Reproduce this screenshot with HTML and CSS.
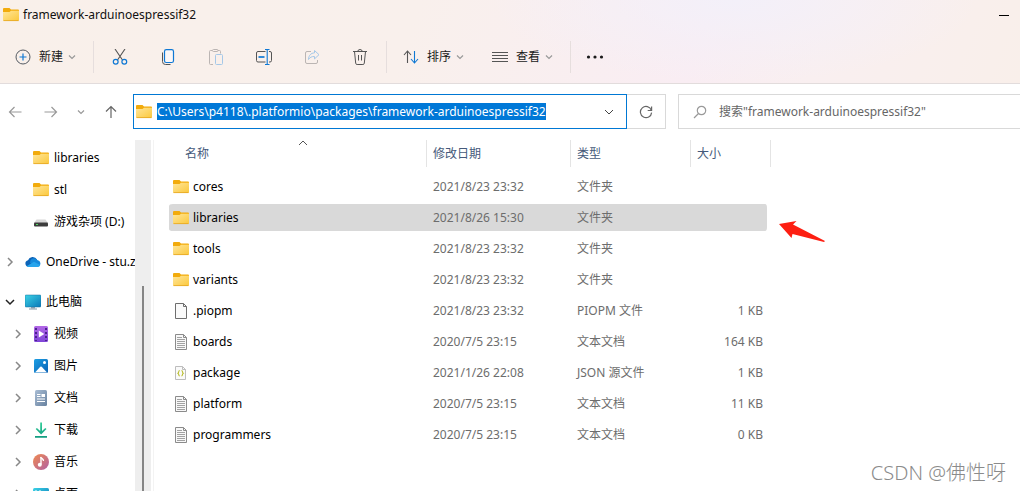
FILE: index.html
```html
<!DOCTYPE html>
<html lang="zh-CN">
<head>
<meta charset="utf-8">
<meta name="viewport" content="width=device-width, initial-scale=1">
<title>framework-arduinoespressif32</title>
<link rel="stylesheet" href="styles.css">
</head>
<body>
<svg class="defs" aria-hidden="true">
  <defs>
    <linearGradient id="gFolder" x1="0" y1="0" x2="1" y2="1"><stop offset="0" stop-color="#ffe69a"/><stop offset="1" stop-color="#fbc83c"/></linearGradient>
    <linearGradient id="gScreen" x1="0" y1="0" x2="1" y2="1"><stop offset="0" stop-color="#3cd3e6"/><stop offset="1" stop-color="#0a78b8"/></linearGradient>
    <linearGradient id="gVideo" x1="0" y1="0" x2="0" y2="1"><stop offset="0" stop-color="#b267e6"/><stop offset="1" stop-color="#7f45d8"/></linearGradient>
    <linearGradient id="gPhoto" x1="0" y1="0" x2="1" y2="1"><stop offset="0" stop-color="#1c9fe4"/><stop offset="1" stop-color="#0c62b4"/></linearGradient>
    <linearGradient id="gDoc" x1="0" y1="0" x2="1" y2="1"><stop offset="0" stop-color="#a9bdd4"/><stop offset="1" stop-color="#67819f"/></linearGradient>
    <linearGradient id="gDown" x1="0" y1="0" x2="0" y2="1"><stop offset="0" stop-color="#35cf9a"/><stop offset="1" stop-color="#109a7f"/></linearGradient>
    <linearGradient id="gMusic" x1="0" y1="0" x2="1" y2="1"><stop offset="0" stop-color="#f08a50"/><stop offset="1" stop-color="#b060a4"/></linearGradient>
  </defs>
  <symbol id="folder" viewBox="0 1 16 16">
    <path d="M0 3a1 1 0 0 1 1-1h5.500l1.500 1.500h7a1 1 0 0 1 1 1V7H0z" fill="#f2ab0c"/>
    <path d="M0 6h6.500L8 4.700h8V14a1 1 0 0 1-1 1H1a1 1 0 0 1-1-1z" fill="url(#gFolder)"/>
    <path d="M.5 14.600h15" stroke="#e3a51f" stroke-width=".8"/>
  </symbol>
  <symbol id="chevron-down" viewBox="0 0 10 10"><path d="M2 3.500l3 3 3-3" fill="none" stroke="currentColor" stroke-width="1.200"/></symbol>
  <symbol id="chevron-right" viewBox="0 0 10 10"><path d="M3 1l4 4-4 4" fill="none" stroke="currentColor" stroke-width="1.500"/></symbol>
  <symbol id="chevron-open" viewBox="0 0 10 10"><path d="M1 3l4 4 4-4" fill="none" stroke="currentColor" stroke-width="1.500"/></symbol>
  <symbol id="text-file" viewBox="0 0 16 16">
    <path d="M2.500.5h8l3 3v12h-11z" fill="#f8f8f8" stroke="#8b8b8b"/>
    <path d="M10.500.5v3h3" fill="none" stroke="#8b8b8b"/>
    <path d="M4 3.500h5M4 5.500h8M4 7.500h8M4 9.500h8M4 11.500h8M4 13.500h8" stroke="#a2a2a2"/>
  </symbol>
</svg>

<div class="window">
  <header class="chrome">
    <div class="titlebar">
      <svg class="icon"><use href="#folder"/></svg>
      <h1 class="title">framework-arduinoespressif32</h1>
      <button class="minimize" type="button" aria-label="最小化"></button>
    </div>
    <div class="toolbar">
      <button class="tool tool-new" type="button">
        <svg class="icon" viewBox="0 0 16 16" fill="none"><circle cx="8" cy="8" r="7" stroke="#555b63"/><path d="M8 4.500v7M4.500 8h7" stroke="#0f78d4" stroke-width="1.200"/></svg>
        <span>新建</span><svg class="caret"><use href="#chevron-down"/></svg>
      </button>
      <span class="divider"></span>
      <div class="actions">
        <button class="tool" type="button" aria-label="剪切"><svg class="icon" viewBox="0 0 16 16" fill="none"><path d="M3 0l7.500 11M13 0L5.500 11" stroke="#555" stroke-width="1.100"/><circle cx="3.700" cy="12.700" r="2.400" stroke="#0f78d4" stroke-width="1.200"/><circle cx="12.300" cy="12.700" r="2.400" stroke="#0f78d4" stroke-width="1.200"/></svg></button>
        <button class="tool" type="button" aria-label="复制"><svg class="icon" viewBox="0 0 16 16" fill="none"><path d="M2.500 3.500v9a3 3 0 0 0 3 3h5" stroke="#555"/><rect x="4.500" y=".7" width="9" height="12.800" rx="1.800" stroke="#0f78d4" stroke-width="1.200" fill="#fbf7f7"/></svg></button>
        <button class="tool" type="button" aria-label="粘贴" disabled><svg class="icon" viewBox="0 0 16 16" fill="none"><path d="M5 15.500H2.500a1 1 0 0 1-1-1v-12a1 1 0 0 1 1-1H4M10 1.500h1.500a1 1 0 0 1 1 1v2" stroke="#bbb5b3"/><rect x="4.500" y=".5" width="5.500" height="2" rx="1" stroke="#bbb5b3"/><rect x="7.500" y="5.500" width="7" height="10" rx="1" stroke="#a5c8e8"/></svg></button>
        <button class="tool" type="button" aria-label="重命名"><svg class="icon" viewBox="0 0 16 16" fill="none"><path d="M9.500 2.500H2a1.500 1.500 0 0 0-1.500 1.500v7.500A1.500 1.500 0 0 0 2 13h7.500M13 2.500h1A1.500 1.500 0 0 1 15.500 4v7.500A1.500 1.500 0 0 1 14 13h-1" stroke="#555"/><path d="M11.200.5v15M9 .5h4.500M9 15.500h4.500" stroke="#0f78d4" stroke-width="1.100"/><path d="M2.500 8h6" stroke="#0f78d4" stroke-width="1.700"/></svg></button>
        <button class="tool" type="button" aria-label="共享" disabled><svg class="icon" viewBox="0 0 16 16" fill="none"><path d="M7 2.500H3A1.500 1.500 0 0 0 1.500 4v9A1.500 1.500 0 0 0 3 14.500h9a1.500 1.500 0 0 0 1.500-1.500v-2" stroke="#bbb5b3"/><path d="M10.500 1.500L15 5.700l-4.500 4.200V7.500C7.500 7.300 6 8.500 4.500 10.500c.2-4 2.300-6.500 6-6.600z" stroke="#a5c8e8" stroke-linejoin="round"/></svg></button>
        <button class="tool" type="button" aria-label="删除"><svg class="icon" viewBox="0 0 16 16" fill="none" stroke="#555"><path d="M1 2.500h14M5.800 2.500a2.200 2 0 0 1 4.400 0M2.500 2.500l1.200 11.700a1.400 1.400 0 0 0 1.400 1.300h5.800a1.400 1.400 0 0 0 1.400-1.300l1.200-11.700M6.500 6v5.500M9.500 6v5.500"/></svg></button>
      </div>
      <span class="divider"></span>
      <div class="view-tools">
        <button class="tool" type="button">
          <svg class="icon" viewBox="0 0 16 16" fill="none" stroke-width="1.100"><path d="M4.500 14V2.500M1 6l3.500-4L8 6" stroke="#555"/><path d="M11.500 2v11.500M8 10l3.500 4 3.500-4" stroke="#0f78d4"/></svg>
          <span>排序</span><svg class="caret"><use href="#chevron-down"/></svg>
        </button>
        <button class="tool" type="button">
          <svg class="icon" viewBox="0 0 16 16"><path d="M0 3.500h16M0 6.500h16M0 9.500h16M0 12.500h16" stroke="#555"/></svg>
          <span>查看</span><svg class="caret"><use href="#chevron-down"/></svg>
        </button>
      </div>
      <span class="divider"></span>
      <button class="tool tool-more" type="button" aria-label="更多"><svg class="more" viewBox="0 0 18 4"><circle cx="2.500" cy="2" r="1.600"/><circle cx="9" cy="2" r="1.600"/><circle cx="15.500" cy="2" r="1.600"/></svg></button>
    </div>
  </header>

  <div class="navbar">
    <nav class="history" aria-label="导航">
      <button type="button" aria-label="后退"><svg class="nav-arrow faded" viewBox="0 0 14 14"><path d="M13.500 7H1.500M6.500 2l-5 5 5 5"/></svg></button>
      <button type="button" aria-label="前进"><svg class="nav-arrow faded" viewBox="0 0 14 14"><path d="M.5 7h12M7.500 2l5 5-5 5"/></svg></button>
      <button type="button" aria-label="最近的位置"><svg class="caret"><use href="#chevron-down"/></svg></button>
      <button type="button" aria-label="向上"><svg class="nav-arrow" viewBox="0 0 14 14"><path d="M7 13V1.500M2 6.500l5-5 5 5"/></svg></button>
    </nav>
    <div class="location">
      <div class="address">
        <svg class="icon"><use href="#folder"/></svg>
        <input id="path" class="path" type="text" aria-label="地址" spellcheck="false" value="C:\Users\p4118\.platformio\packages\framework-arduinoespressif32">
        <button type="button" aria-label="以前的位置"><svg class="drop" viewBox="0 0 12 12"><path d="M2 4l4 4 4-4" fill="none" stroke="#444"/></svg></button>
      </div>
      <button class="refresh" type="button" aria-label="刷新"><svg class="nav-arrow" viewBox="0 0 14 14"><path d="M12.300 5.200A5.600 5.600 0 1 0 12.600 7.600M12.600 1.500v4H8.700"/></svg></button>
    </div>
    <div class="search">
      <svg class="nav-arrow faded" viewBox="0 0 14 14"><circle cx="8.500" cy="5.500" r="4.200"/><path d="M5.500 8.500L1 13"/></svg>
      <input type="search" aria-label="搜索" placeholder="搜索&quot;framework-arduinoespressif32&quot;">
    </div>
  </div>

  <div class="content">
    <aside class="sidebar">
      <ul class="tree">
        <li class="node child"><svg class="icon"><use href="#folder"/></svg><span>libraries</span></li>
        <li class="node child"><svg class="icon"><use href="#folder"/></svg><span>stl</span></li>
        <li class="node child"><svg class="icon" viewBox="0 0 16 16"><path d="M3.500 5.500h9L15 9H1z" fill="#d8d8d8"/><rect x="1" y="8.500" width="14" height="4" rx="1" fill="#3c3c3c"/><path d="M3 10.500h2" stroke="#50d860"/></svg><span>游戏杂项 (D:)</span></li>
        <li class="node account"><svg class="twisty"><use href="#chevron-right"/></svg><svg class="icon" viewBox="0 0 16 16"><path d="M3.300 12.700A3.300 3.300 0 0 1 3 6.200 5 5 0 0 1 12 5.500l-1 7.200z" fill="#0b63b8"/><path d="M5.500 6.200a4 4 0 0 1 6.800-.2 3.500 3.500 0 0 1 .7 6.800L5 9z" fill="#1689db"/><path d="M1.500 12.300L9 7.800l6.200 3.200a2.500 2.500 0 0 1-2.500 2H3.300a3 3 0 0 1-1.800-.7z" fill="#27a4ec"/></svg><span>OneDrive - stu.zzu</span></li>
        <li class="node computer"><svg class="twisty open"><use href="#chevron-open"/></svg><svg class="icon" viewBox="0 0 16 16"><path d="M6 12h4v2.500H6z" fill="#9aa8b2"/><path d="M4 15h8" stroke="#8497a4"/><rect width="16" height="12" y="1" rx="1" fill="url(#gScreen)" stroke="#146c9c" stroke-width=".5"/></svg><span>此电脑</span></li>
        <li class="node leaf"><svg class="twisty"><use href="#chevron-right"/></svg><svg class="icon" viewBox="0 0 16 16"><rect x="1" y="0" width="14" height="16" rx="1.500" fill="url(#gVideo)"/><path d="M3 2v13M13 2v13" stroke="#4b218e" stroke-width="2" stroke-dasharray="2 2"/><path d="M5.800 4.500l5.500 3.500-5.500 3.500z" fill="#fff"/></svg><span>视频</span></li>
        <li class="node leaf"><svg class="twisty"><use href="#chevron-right"/></svg><svg class="icon" viewBox="0 0 16 16"><rect x="1" y="1" width="14" height="14" rx="1.500" fill="url(#gPhoto)"/><path d="M2 14.500l5.300-5.700a1 1 0 0 1 1.400 0L14 14.500z" fill="#fff"/><circle cx="11.500" cy="4.500" r="1.500" fill="#fff"/></svg><span>图片</span></li>
        <li class="node leaf"><svg class="twisty"><use href="#chevron-right"/></svg><svg class="icon" viewBox="0 0 16 16"><rect x="2" y="0" width="12" height="16" rx="1.500" fill="url(#gDoc)"/><path d="M4 4.500h3.500M4 6.500h3.500M4 9h8M4 11.500h8" stroke="#fff" stroke-width="1.200"/><path d="M8.500 4h3.500v3H8.500z" fill="#fff"/></svg><span>文档</span></li>
        <li class="node leaf"><svg class="twisty"><use href="#chevron-right"/></svg><svg class="icon" viewBox="0 0 16 16"><path d="M7.200.5h1.800v8.600l3.300-3.200 1.200 1.200L8.100 12.500 2.700 7.100l1.200-1.200 3.300 3.200zM2 14h12v1.800H2z" fill="url(#gDown)"/></svg><span>下载</span></li>
        <li class="node leaf"><svg class="twisty"><use href="#chevron-right"/></svg><svg class="icon" viewBox="0 0 16 16"><circle cx="8" cy="8" r="8" fill="url(#gMusic)"/><path d="M8 3.500v7" stroke="#fff" stroke-width="1.400"/><path d="M7.500 3c.5 1.500 3.200 1.500 3 4" fill="none" stroke="#fff" stroke-width="1.300"/><circle cx="6.800" cy="10.700" r="2" fill="#fff"/></svg><span>音乐</span></li>
        <li class="node leaf"><svg class="twisty"><use href="#chevron-right"/></svg><svg class="icon" viewBox="0 0 16 16"><rect y="2" width="16" height="13" rx="1.500" fill="url(#gScreen)"/><path d="M2 5h2M6 5h2" stroke="#fff"/></svg><span>桌面</span></li>
      </ul>
      <div class="scrollbar"><div class="thumb"></div></div>
    </aside>

    <main class="files">
      <table>
        <colgroup><col class="c-name"><col class="c-date"><col class="c-type"><col class="c-size"></colgroup>
        <thead>
          <tr><th scope="col" aria-sort="ascending">名称<svg class="sort" viewBox="0 0 10 6"><path d="M1 5l4-4 4 4" fill="none" stroke="#555"/></svg></th><th scope="col">修改日期</th><th scope="col">类型</th><th scope="col">大小</th></tr>
        </thead>
        <tbody>
          <tr><td><div class="file"><svg class="icon"><use href="#folder"/></svg>cores</div></td><td>2021/8/23 23:32</td><td>文件夹</td><td></td></tr>
          <tr class="selected"><td><div class="file"><svg class="icon"><use href="#folder"/></svg>libraries</div></td><td>2021/8/26 15:30</td><td>文件夹</td><td></td></tr>
          <tr><td><div class="file"><svg class="icon"><use href="#folder"/></svg>tools</div></td><td>2021/8/23 23:32</td><td>文件夹</td><td></td></tr>
          <tr><td><div class="file"><svg class="icon"><use href="#folder"/></svg>variants</div></td><td>2021/8/23 23:32</td><td>文件夹</td><td></td></tr>
          <tr><td><div class="file"><svg class="icon" viewBox="0 0 16 16"><path d="M2.500.5h8l3 3v12h-11z" fill="#fafafa" stroke="#6e6e6e"/><path d="M10.500.5v3h3" fill="none" stroke="#6e6e6e"/></svg>.piopm</div></td><td>2021/8/23 23:32</td><td>PIOPM 文件</td><td>1 KB</td></tr>
          <tr><td><div class="file"><svg class="icon"><use href="#text-file"/></svg>boards</div></td><td>2020/7/5 23:15</td><td>文本文档</td><td>164 KB</td></tr>
          <tr><td><div class="file"><svg class="icon" viewBox="0 0 16 16"><path d="M2.500 1.500h7l3 3v10h-10z" fill="#fafafa" stroke="#bdbdbd"/><path d="M9.500 1.500v3h3" fill="none" stroke="#bdbdbd"/><path d="M6.700 5.500c-1.500 0-.5 2-1.700 2.700 1.200.6.200 2.700 1.700 2.700M8.500 5.500c1.500 0 .5 2 1.700 2.700-1.200.6-.2 2.700-1.700 2.700" fill="none" stroke="#b9bd2c" stroke-width="1.100"/></svg>package</div></td><td>2021/1/26 22:08</td><td>JSON 源文件</td><td>1 KB</td></tr>
          <tr><td><div class="file"><svg class="icon"><use href="#text-file"/></svg>platform</div></td><td>2020/7/5 23:15</td><td>文本文档</td><td>11 KB</td></tr>
          <tr><td><div class="file"><svg class="icon"><use href="#text-file"/></svg>programmers</div></td><td>2020/7/5 23:15</td><td>文本文档</td><td>0 KB</td></tr>
        </tbody>
      </table>
      <svg class="pointer" viewBox="0 0 46 22" aria-hidden="true"><path d="M0 3L17.500 0 14 3.500 46 20 45 21 13.500 13 12.500 17z" fill="#fd1f12"/></svg>
      <p class="watermark">CSDN @佛性呀</p>
    </main>
  </div>
</div>
<script src="script.js"></script>
</body>
</html>
```
FILE: styles.css
```css
* { box-sizing: border-box; }

body {
  margin: 0;
  background: #fff;
  color: #111;
  font: 12px/16px "Noto Sans", "Noto Sans CJK SC", sans-serif;
  overflow: hidden;
}

button, input {
  margin: 0;
  padding: 0;
  border: 0;
  background: none;
  color: inherit;
  font: inherit;
}

button { display: flex; align-items: center; justify-content: center; }
svg { display: block; flex: none; }

.defs { position: absolute; width: 0; height: 0; }
.icon { width: 16px; height: 16px; }
.caret { width: 10px; height: 10px; color: #999; }

.window { display: flex; flex-direction: column; height: 100vh; }

/* Title bar and toolbar */
.chrome {
  flex: none;
  border-bottom: 1px solid #e2dcdc;
  background:
    radial-gradient(ellipse 24% 100% at 72% 0, #f3f0f9, transparent),
    linear-gradient(110deg, #f9f0ea 0%, #f9f0ec 40%, #f9edf3 68%, #f9eff0 80%, #f9efea 100%);
}

.titlebar { display: flex; align-items: center; gap: 4px; height: 30px; padding: 0 9px 0 3px; }
.title { flex: 1; margin: 0; font-size: 12px; font-weight: 400; }
.minimize { width: 14px; height: 14px; }
.minimize::before { content: ""; width: 10px; height: 1px; background: #000; }

.toolbar { display: flex; align-items: center; height: 53px; padding: 0 15px; }
.tool { gap: 8px; height: 32px; color: #1a1a1a; }
.tool .caret { margin-left: -4px; }
.tool-new { margin-right: 16px; }
.divider { width: 1px; height: 32px; background: #e6dedd; }
.actions { display: flex; gap: 32px; padding: 0 18px; }
.view-tools { display: flex; gap: 27px; padding: 0 16px; }
.tool-more { margin-left: 15px; }
.more { width: 18px; height: 4px; fill: #1a1a1a; }

/* Navigation row */
.navbar { display: flex; flex: none; height: 56px; padding: 10px 0 11px 8px; }
.history { display: flex; align-items: center; gap: 22px; width: 125px; }
.history .caret { margin: 0 -4px; }
.nav-arrow { width: 14px; height: 14px; fill: none; stroke: #666; stroke-width: 1.2; }
.faded { stroke: #999; }

.location { display: flex; flex: 533 1 0; min-width: 0; margin-right: 12px; }
.address { display: flex; flex: 1; align-items: center; gap: 5px; min-width: 0; padding: 0 11px 0 2px; border: 1px solid #0078d4; }
.path { flex: 1; min-width: 0; height: 18px; outline: 0; caret-color: #f07820; }
.path::selection { background: #0078d7; color: #fff; }
.drop { width: 12px; height: 12px; }
.refresh { width: 39px; border: 1px solid #d9d9d9; border-left: 0; }
.search { display: flex; flex: 327 1 0; align-items: center; gap: 12px; min-width: 0; padding-left: 14px; border: 1px solid #d9d9d9; border-right: 0; }
.search input { flex: 1; min-width: 0; outline: 0; }
.search input::placeholder { color: #666; opacity: 1; }

/* Folder tree */
.content { display: flex; flex: 1; min-height: 0; }
.sidebar { display: flex; width: 154px; flex: none; border-right: 1px solid #f3f3f3; }
.tree { flex: 1; min-width: 0; margin: 0; padding: 2px 0 0; list-style: none; overflow: hidden; }
.node { display: flex; align-items: center; gap: 5px; height: 32px; color: #000; white-space: nowrap; }
.child { padding-left: 33px; }
.account { height: 48px; padding-left: 5px; }
.computer { padding-left: 5px; }
.leaf { padding-left: 13px; }
.twisty { width: 10px; height: 10px; margin-right: 5px; color: #888; }
.twisty.open { color: #222; }
.scrollbar { width: 16px; margin-right: 2px; background: #eee; overflow: hidden; }
.thumb { width: 2px; height: 100%; margin: 146px auto 0; background: #858585; }

/* File list */
.files { position: relative; flex: 1; min-width: 0; padding-left: 15px; }
table { table-layout: fixed; width: 602px; border-collapse: separate; border-spacing: 0; }
.c-name { width: 258px; }
.c-date { width: 144px; }
.c-type { width: 120px; }
.c-size { width: 80px; }
th, td { padding: 0 6px; text-align: left; white-space: nowrap; }
th { position: relative; height: 27px; border-right: 1px solid #e4e4e4; color: #45597a; font-weight: 400; }
th:first-child { padding-left: 16px; }
.sort { position: absolute; top: 0; left: 129px; width: 10px; height: 6px; }
td { height: 31px; border: 0 solid transparent; border-width: 2px 0; background-clip: padding-box; color: #6d6d6d; }
td:first-child { padding-left: 4px; border-radius: 4px 0 0 4px; color: #000; }
td:last-child { padding-right: 4px; border-right-width: 4px; border-radius: 0 6px 6px 0; text-align: right; }
tbody::before { content: ""; display: block; height: 4px; }
.selected td { background-color: #d9d9d9; }
.file { display: flex; align-items: center; gap: 4px; }

.pointer { position: absolute; top: 81px; left: 625px; width: 46px; height: 22px; }
.watermark { position: absolute; right: 14px; bottom: 6px; margin: 0; color: #8b8b8b; font: 300 20px/24px "Noto Sans", "Noto Sans CJK SC", sans-serif; }
```
FILE: script.js
```js
const path = document.getElementById("path");
path.focus();
path.select();
```
